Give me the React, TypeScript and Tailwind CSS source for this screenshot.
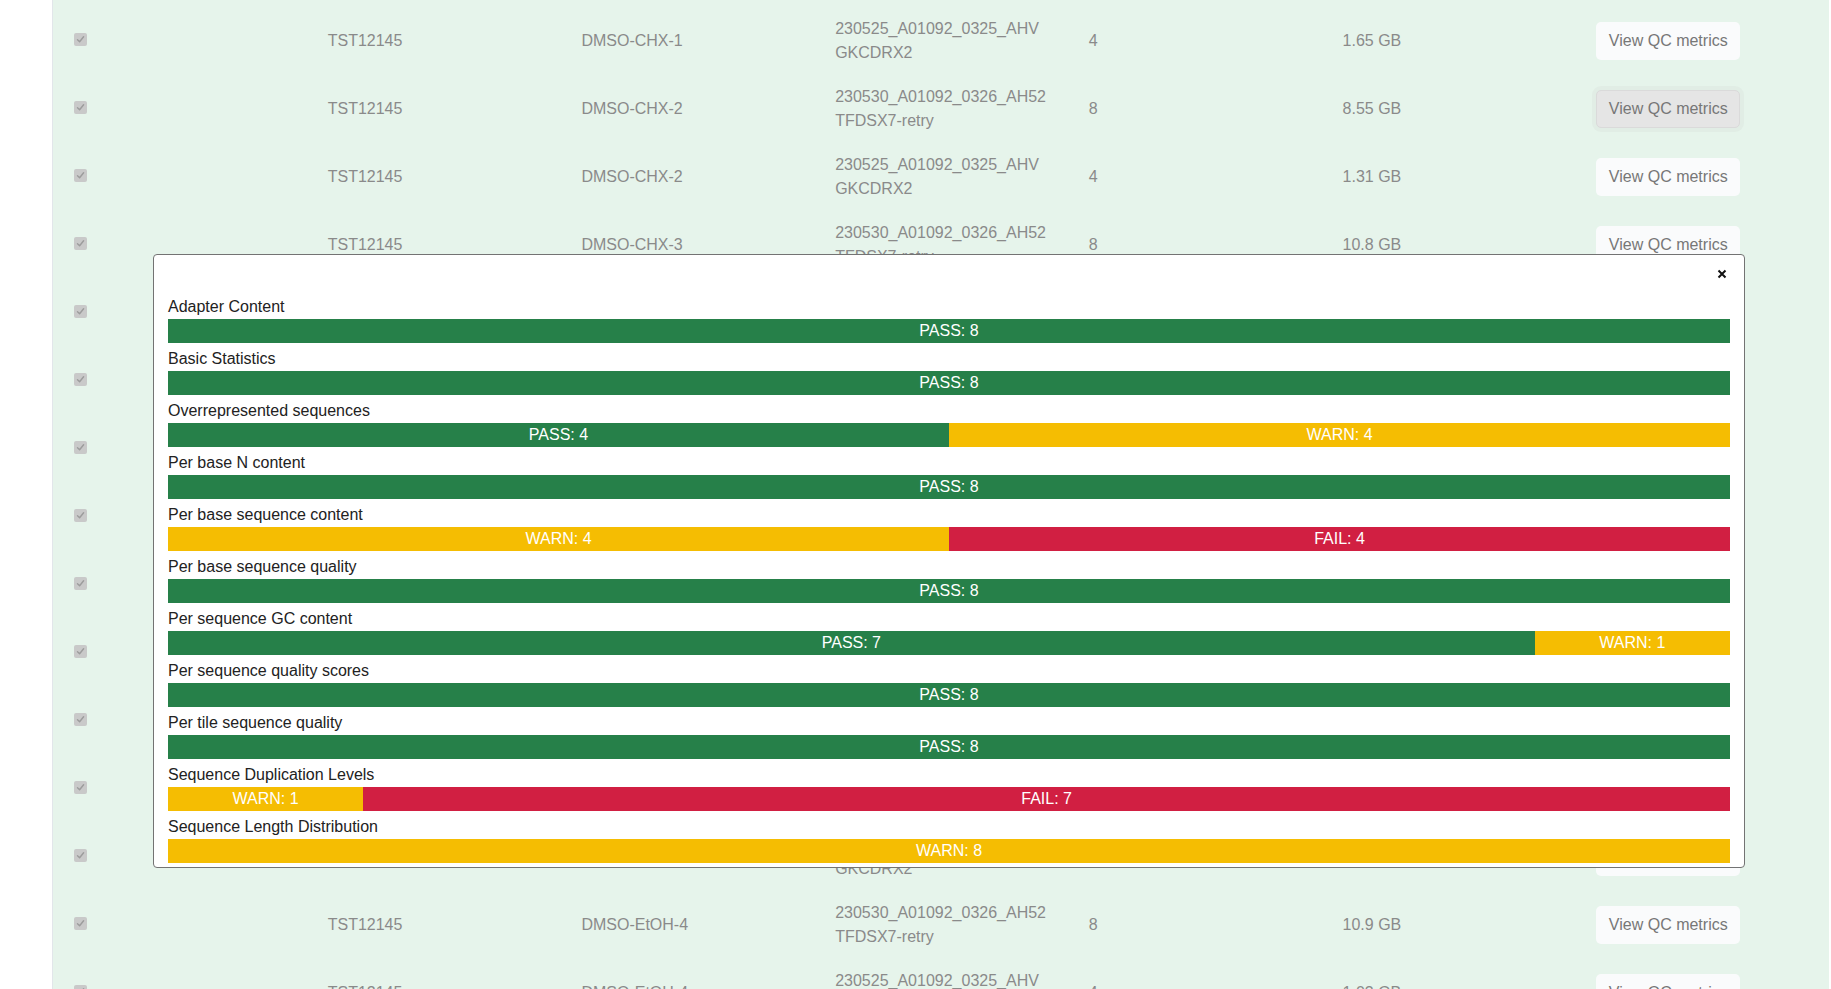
import React from "react";

/*
 * Sequencing runs table (scrolled) with the FastQC summary popover open on top.
 */

interface RunRow {
  project: string;
  sample: string;
  run: string;
  lanes: number;
  size: string;
}

const RUN_A = "230525_A01092_0325_AHVGKCDRX2";
const RUN_B = "230530_A01092_0326_AH52TFDSX7-retry";

const ROWS: RunRow[] = [
  { project: "TST12145", sample: "DMSO-CHX-1", run: RUN_A, lanes: 4, size: "1.65 GB" },
  { project: "TST12145", sample: "DMSO-CHX-2", run: RUN_B, lanes: 8, size: "8.55 GB" },
  { project: "TST12145", sample: "DMSO-CHX-2", run: RUN_A, lanes: 4, size: "1.31 GB" },
  { project: "TST12145", sample: "DMSO-CHX-3", run: RUN_B, lanes: 8, size: "10.8 GB" },
  { project: "TST12145", sample: "DMSO-CHX-3", run: RUN_A, lanes: 4, size: "1.42 GB" },
  { project: "TST12145", sample: "DMSO-EtOH-1", run: RUN_B, lanes: 8, size: "9.87 GB" },
  { project: "TST12145", sample: "DMSO-EtOH-1", run: RUN_A, lanes: 4, size: "1.12 GB" },
  { project: "TST12145", sample: "DMSO-EtOH-2", run: RUN_B, lanes: 8, size: "10.2 GB" },
  { project: "TST12145", sample: "DMSO-EtOH-2", run: RUN_A, lanes: 4, size: "1.27 GB" },
  { project: "TST12145", sample: "DMSO-EtOH-3", run: RUN_B, lanes: 8, size: "9.41 GB" },
  { project: "TST12145", sample: "DMSO-EtOH-3", run: RUN_A, lanes: 4, size: "1.19 GB" },
  { project: "TST12145", sample: "DMSO-EtOH-3", run: RUN_B, lanes: 8, size: "8.93 GB" },
  { project: "TST12145", sample: "DMSO-EtOH-3", run: RUN_A, lanes: 4, size: "1.05 GB" },
  { project: "TST12145", sample: "DMSO-EtOH-4", run: RUN_B, lanes: 8, size: "10.9 GB" },
  { project: "TST12145", sample: "DMSO-EtOH-4", run: RUN_A, lanes: 4, size: "1.03 GB" },
];

type Status = "PASS" | "WARN" | "FAIL";

interface Metric {
  name: string;
  counts: [Status, number][];
}

const METRICS: Metric[] = [
  { name: "Adapter Content", counts: [["PASS", 8]] },
  { name: "Basic Statistics", counts: [["PASS", 8]] },
  { name: "Overrepresented sequences", counts: [["PASS", 4], ["WARN", 4]] },
  { name: "Per base N content", counts: [["PASS", 8]] },
  { name: "Per base sequence content", counts: [["WARN", 4], ["FAIL", 4]] },
  { name: "Per base sequence quality", counts: [["PASS", 8]] },
  { name: "Per sequence GC content", counts: [["PASS", 7], ["WARN", 1]] },
  { name: "Per sequence quality scores", counts: [["PASS", 8]] },
  { name: "Per tile sequence quality", counts: [["PASS", 8]] },
  { name: "Sequence Duplication Levels", counts: [["WARN", 1], ["FAIL", 7]] },
  { name: "Sequence Length Distribution", counts: [["WARN", 8]] },
];

const STATUS_BG: Record<Status, string> = {
  PASS: "bg-[#268049]",
  WARN: "bg-[#f5bd02]",
  FAIL: "bg-[#d11f42]",
};

export default function App() {
  return (
    <div className="relative flex h-[989px] w-full overflow-hidden bg-white font-['Liberation_Sans',Arial,sans-serif]">
      {/* ── left gutter ── */}
      <div className="w-[53px] shrink-0 border-r border-[#e2e6ea] bg-white" />

      {/* ── runs table ── */}
      <main className="w-[1776px] shrink-0 bg-[#e6f4eb] pt-[7px]">
        {ROWS.map((row, i) => (
          <TableRow key={i} row={row} hovered={i === 1} />
        ))}
      </main>

      <div className="flex-1 bg-white" />

      {/* ── QC popover ── */}
      <QcPopover />
    </div>
  );
}

function TableRow({ row, hovered }: { row: RunRow; hovered: boolean }) {
  const cell = "pl-[21px] pr-[19px] flex items-center";
  return (
    <div className="grid h-[68px] grid-cols-7 text-[16px] leading-6 text-[#8a8a8a]">
      <div className={cell}>
        <Checkbox />
      </div>
      <div className={cell}>{row.project}</div>
      <div className={cell}>{row.sample}</div>
      <div className={cell}>
        <span className="break-all">{row.run}</span>
      </div>
      <div className={cell}>{row.lanes}</div>
      <div className={cell}>{row.size}</div>
      <div className={cell}>
        {hovered ? (
          <button className="h-[38px] w-[144px] rounded-[5px] border border-[#dadada] bg-[#e5e5e5] text-[16px] text-[#777] shadow-[0_0_0_4px_#e1ede5]">
            View QC metrics
          </button>
        ) : (
          <button className="h-[38px] w-[144px] rounded-[5px] bg-[#fafbfc] text-[16px] text-[#777]">
            View QC metrics
          </button>
        )}
      </div>
    </div>
  );
}

function Checkbox() {
  return (
    <span className="mb-[3px] flex h-[13px] w-[13px] items-center justify-center rounded-[2px] bg-[#c9c9c9]">
      <svg width="9" height="9" viewBox="0 0 9 9" fill="none">
        <path d="M1.5 4.8 L3.6 6.8 L7.6 1.8" stroke="#9c9c9c" strokeWidth="1.4" strokeLinecap="round" strokeLinejoin="round" />
      </svg>
    </span>
  );
}

function QcPopover() {
  return (
    <div className="absolute left-[153px] top-[254px] w-[1592px] rounded-[4px] border border-[#737373] bg-white px-[14px] pb-[4px]">
      <div className="flex h-[36px] items-center justify-end pr-[3px]">
        <svg width="10" height="10" viewBox="0 0 10 10" className="mt-[2px]">
          <path d="M1.5 1.5 L8.5 8.5 M8.5 1.5 L1.5 8.5" stroke="#111" strokeWidth="2" />
        </svg>
      </div>
      {METRICS.map((m) => (
        <div key={m.name}>
          <div className="h-[28px] pt-[3px] text-[16px] leading-[25px] text-[#222]">{m.name}</div>
          <div className="flex h-[24px] w-full">
            {m.counts.map(([status, n]) => (
              <div
                key={status}
                className={`${STATUS_BG[status]} flex basis-0 items-center justify-center text-[16px] leading-6 text-white`}
                style={{ flexGrow: n }}
              >
                {`${status}: ${n}`}
              </div>
            ))}
          </div>
        </div>
      ))}
    </div>
  );
}
